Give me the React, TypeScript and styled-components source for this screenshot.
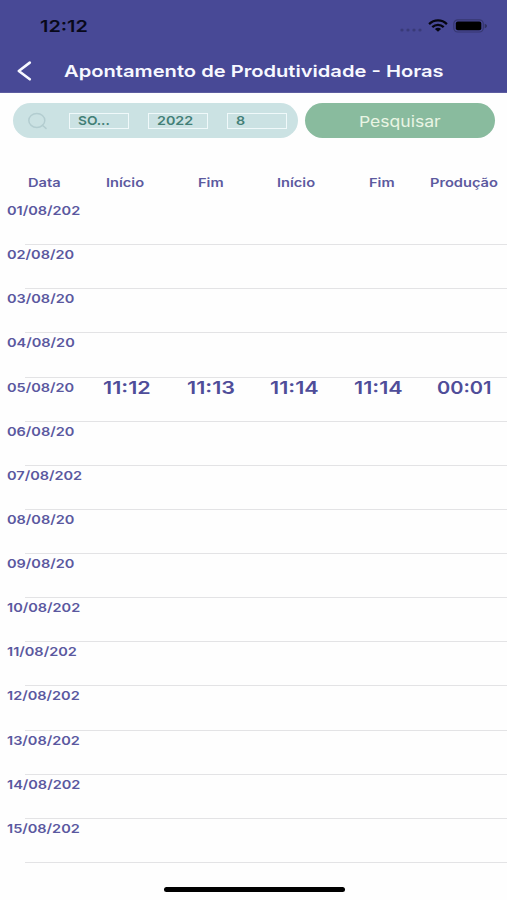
import React from "react";
import styled, { createGlobalStyle } from "styled-components";

const GlobalStyle = createGlobalStyle`
  * { box-sizing: border-box; }
  body { margin: 0; background: #fefefe; font-family: Inter, "Liberation Sans", sans-serif; }
`;

const Screen = styled.main`
  width: 507px;
  height: 900px;
  display: flex;
  flex-direction: column;
  overflow: hidden;
  background: #fefefe;
`;

const Label = styled.span<{ $size: number; $weight?: number; $stretch?: number }>`
  display: block;
  white-space: nowrap;
  line-height: 20px;
  font-size: ${(p) => p.$size}px;
  font-weight: ${(p) => p.$weight ?? 600};
  transform: scaleX(${(p) => p.$stretch ?? 1.22});
  transform-origin: left center;
`;

const Header = styled.header`
  height: 93px;
  flex: none;
  background: #484996;
  border-bottom: 1px solid #5c5ca0;
`;

const StatusBar = styled.div`
  height: 50px;
  padding: 16px 18px 0 40px;
  display: flex;
  justify-content: space-between;
  align-items: flex-start;
  color: #08091a;
`;

const StatusIcons = styled.svg`
  display: block;
  width: 90px;
  height: 20px;
`;

const NavBar = styled.div`
  height: 42px;
  padding-left: 16px;
  display: flex;
  align-items: center;
  color: #f7f8ff;
`;

const BackIcon = styled.svg`
  width: 17px;
  height: 22px;
  margin-right: 31px;
`;

const SearchRow = styled.section`
  flex: none;
  height: 35px;
  margin: 10px 12px 0 13px;
  display: grid;
  grid-template-columns: 285px 190px;
  column-gap: 7px;
`;

const Filters = styled.div`
  display: flex;
  align-items: center;
  padding-left: 14px;
  border-radius: 18px;
  background: #cbe2e3;
`;

const SearchIcon = styled.svg`
  flex: none;
  width: 21px;
  height: 18px;
  margin-right: 21px;
`;

const Field = styled.div`
  flex: none;
  width: 60px;
  height: 16px;
  margin-right: 19px;
  padding: 1px 0 0 8px;
  display: flex;
  align-items: center;
  border: 1px solid #f0f9fa;
  color: #427f76;
`;

const SearchButton = styled.button`
  border: 0;
  padding: 2px 0 0 54px;
  display: flex;
  align-items: center;
  border-radius: 18px;
  background: #89bb9e;
  color: #e9f5e4;
  font-family: inherit;
`;

const ColumnHeads = styled.div`
  flex: none;
  height: 63px;
  padding: 35px 0 0 27.5px;
  display: grid;
  grid-template-columns: 78px 92px 79px 92px 61.5px 1fr;
  color: #5c5a9f;
`;

const List = styled.div`
  flex: none;
`;

const Row = styled.div`
  height: 44.14px;
  display: flex;
  flex-direction: column;
  justify-content: space-between;
  color: #5a589f;
`;

const Cells = styled.div`
  display: grid;
  height: 20px;
  padding-left: 7px;
  grid-template-columns: 95.5px 84px 83.5px 83.5px 83.5px 1fr;
`;

const Time = styled.div`
  color: #4f4d99;
`;

const Divider = styled.div`
  height: 1px;
  margin-left: 25px;
  background: #e3e3e5;
`;

const HomeIndicator = styled.div`
  width: 181px;
  height: 5px;
  margin: 24px 0 0 163.5px;
  flex: none;
  border-radius: 3px;
  background: #000;
`;

const heads = ["Data", "Início", "Fim", "Início", "Fim", "Produção"];
const filters = ["SO...", "2022", "8"];
const rows: { date: string; times?: string[] }[] = [
  { date: "01/08/202" },
  { date: "02/08/20" },
  { date: "03/08/20" },
  { date: "04/08/20" },
  { date: "05/08/20", times: ["11:12", "11:13", "11:14", "11:14", "00:01"] },
  { date: "06/08/20" },
  { date: "07/08/202" },
  { date: "08/08/20" },
  { date: "09/08/20" },
  { date: "10/08/202" },
  { date: "11/08/202" },
  { date: "12/08/202" },
  { date: "13/08/202" },
  { date: "14/08/202" },
  { date: "15/08/202" },
];

export default function App() {
  return (
    <Screen>
      <GlobalStyle />
      <Header>
        <StatusBar>
          <Label $size={16} $stretch={1.24}>12:12</Label>
          <StatusIcons viewBox="0 0 90 20">
            <g fill="#393a78">
              <circle cx="3" cy="14" r="1.6" />
              <circle cx="9" cy="14" r="1.6" />
              <circle cx="15" cy="14" r="1.6" />
              <circle cx="21" cy="14" r="1.6" />
            </g>
            <g fill="none" stroke="#05050f" strokeWidth="2.3">
              <path d="M30.1 8.1C35.1 3.2 42.9 3.2 47.9 8.1" />
              <path d="M33.3 11.2C36.5 8.2 41.5 8.2 44.7 11.2" />
            </g>
            <path d="M35.9 12.9C37.7 11.3 40.3 11.3 42.1 12.9L39 15.8Z" fill="#05050f" />
            <rect x="54.8" y="3.8" width="29.5" height="12.2" rx="4" fill="none" stroke="#363770" strokeWidth="1.2" />
            <rect x="56.8" y="5.6" width="25.5" height="8.6" rx="2" fill="#000" />
            <path d="M85.7 7.8C88.8 8.6 88.8 11.4 85.7 12.2Z" fill="#30315f" />
          </StatusIcons>
        </StatusBar>
        <NavBar>
          <BackIcon viewBox="0 0 17 22">
            <path d="M13.8 2.6L2.8 11L13.8 19.3" fill="none" stroke="currentColor" strokeWidth="2.6" strokeLinecap="round" strokeLinejoin="round" />
          </BackIcon>
          <Label $size={16.5}>Apontamento de Produtividade - Horas</Label>
        </NavBar>
      </Header>
      <SearchRow>
        <Filters>
          <SearchIcon viewBox="0 0 21 18">
            <g fill="none" stroke="#b3cdd0" strokeWidth="1.5" strokeLinecap="round">
              <ellipse cx="9.8" cy="8.4" rx="8" ry="7" />
              <path d="M15.4 13.3L19 16.4" />
            </g>
          </SearchIcon>
          {filters.map((f) => (
            <Field key={f}>
              <Label $size={12.3} $stretch={f.startsWith("SO") ? 1.11 : 1.16}>{f}</Label>
            </Field>
          ))}
        </Filters>
        <SearchButton>
          <Label $size={15} $weight={400} $stretch={1.17}>Pesquisar</Label>
        </SearchButton>
      </SearchRow>
      <ColumnHeads>
        {heads.map((h, i) => (
          <Label key={i} $size={11.8} $stretch={1.24}>{h}</Label>
        ))}
      </ColumnHeads>
      <List>
        {rows.map((r) => (
          <Row key={r.date}>
            <Cells>
              <Label $size={12.3} $stretch={1.18}>{r.date}</Label>
              {r.times?.map((t, i) => (
                <Time key={i}>
                  <Label $size={17} $stretch={t.startsWith("11") ? 1.27 : 1.18}>{t}</Label>
                </Time>
              ))}
            </Cells>
            <Divider />
          </Row>
        ))}
      </List>
      <HomeIndicator />
    </Screen>
  );
}
